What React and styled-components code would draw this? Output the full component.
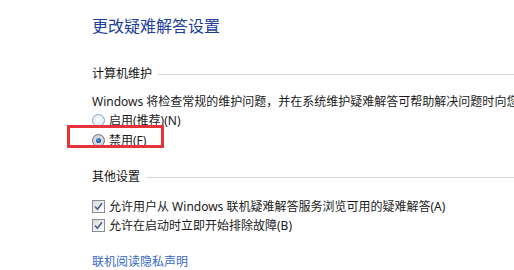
import React from 'react';
import styled, { createGlobalStyle } from 'styled-components';

const GlobalStyle = createGlobalStyle`
  html, body {
    margin: 0;
    padding: 0;
    background: #fff;
    overflow: hidden;
  }
  body {
    font-family: "Noto Sans", "Noto Sans CJK SC", sans-serif;
    font-size: 12px;
    color: #1a1a1a;
  }
`;

const Page = styled.div`
  display: flex;
  flex-direction: column;
  padding: 16px 0 0 92px;
  width: 514px;
  height: 270px;
  box-sizing: border-box;
  white-space: nowrap;
  overflow: hidden;
`;

const Title = styled.h1`
  margin: 0;
  font-size: 16px;
  line-height: 20px;
  font-weight: normal;
  color: #1d3d9b;
`;

const Section = styled.div`
  display: flex;
  align-items: center;
  margin-top: ${({ top }) => top}px;
  height: 16px;
  line-height: 16px;
  color: #111;

  &::after {
    content: '';
    flex: 1;
    margin-left: 6px;
    border-top: 1px solid #d4d4d4;
  }
`;

const Description = styled.p`
  margin: 11px 0 0;
  line-height: 18px;
  height: 18px;
`;

const Options = styled.div`
  display: flex;
  flex-direction: column;
  gap: 1px;
  margin-top: ${({ top }) => top}px;
`;

const Row = styled.label`
  position: relative;
  display: flex;
  align-items: center;
  gap: 4px;
  height: 19px;
  line-height: 19px;
`;

const Radio = styled.span`
  position: relative;
  width: 11px;
  height: 11px;
  border-radius: 50%;
  border: 1px solid ${({ checked }) => (checked ? '#6b7079' : '#8fa5bd')};
  background: ${({ checked }) =>
    checked
      ? 'radial-gradient(circle at 50% 50%, #e8e8e8 0, #cfd3d8 70%, #b9bec5 100%)'
      : 'radial-gradient(circle at 45% 40%, #ffffff 0, #e2eefa 55%, #c4dcf2 100%)'};

  &::after {
    content: '';
    display: ${({ checked }) => (checked ? 'block' : 'none')};
    position: absolute;
    left: 3px;
    top: 3px;
    width: 5px;
    height: 5px;
    border-radius: 50%;
    background: radial-gradient(circle at 40% 35%, #5aa0e6 0, #1e5aa8 60%, #0d2f66 100%);
  }
`;

const Box = styled.span`
  display: flex;
  align-items: center;
  justify-content: center;
  width: 11px;
  height: 11px;
  border: 1px solid #8a8d92;
  background: linear-gradient(135deg, #d9dbde 0%, #f4f5f6 70%, #ffffff 100%);
`;

const Highlight = styled.span`
  position: absolute;
  left: -25px;
  top: -6px;
  width: 97px;
  height: 23px;
  border: 3px solid #e8333b;
  box-sizing: border-box;
  pointer-events: none;
`;

const Link = styled.a`
  margin-top: 19px;
  line-height: 16px;
  color: #3769c0;
  text-decoration: none;
`;

const Check = () => (
  <svg width="9" height="9" viewBox="0 0 9 9">
    <path d="M1 4.5 L3.4 7.2 L8 1.2" fill="none" stroke="#4b5e94" strokeWidth="1.6" />
  </svg>
);

export default function App() {
  return (
    <>
      <GlobalStyle />
      <Page>
        <Title>更改疑难解答设置</Title>

        <Section top={30}>计算机维护</Section>
        <Description>
          Windows 将检查常规的维护问题，并在系统维护疑难解答可帮助解决问题时向您发出通知。
        </Description>
        <Options top={0}>
          <Row>
            <Radio />
            启用(推荐)(N)
          </Row>
          <Row>
            <Radio checked />
            禁用(F)
            <Highlight />
          </Row>
        </Options>

        <Section top={19}>其他设置</Section>
        <Options top={12} style={{ gap: 0 }}>
          <Row>
            <Box><Check /></Box>
            允许用户从 Windows 联机疑难解答服务浏览可用的疑难解答(A)
          </Row>
          <Row>
            <Box><Check /></Box>
            允许在启动时立即开始排除故障(B)
          </Row>
        </Options>

        <Link href="#">联机阅读隐私声明</Link>
      </Page>
    </>
  );
}
